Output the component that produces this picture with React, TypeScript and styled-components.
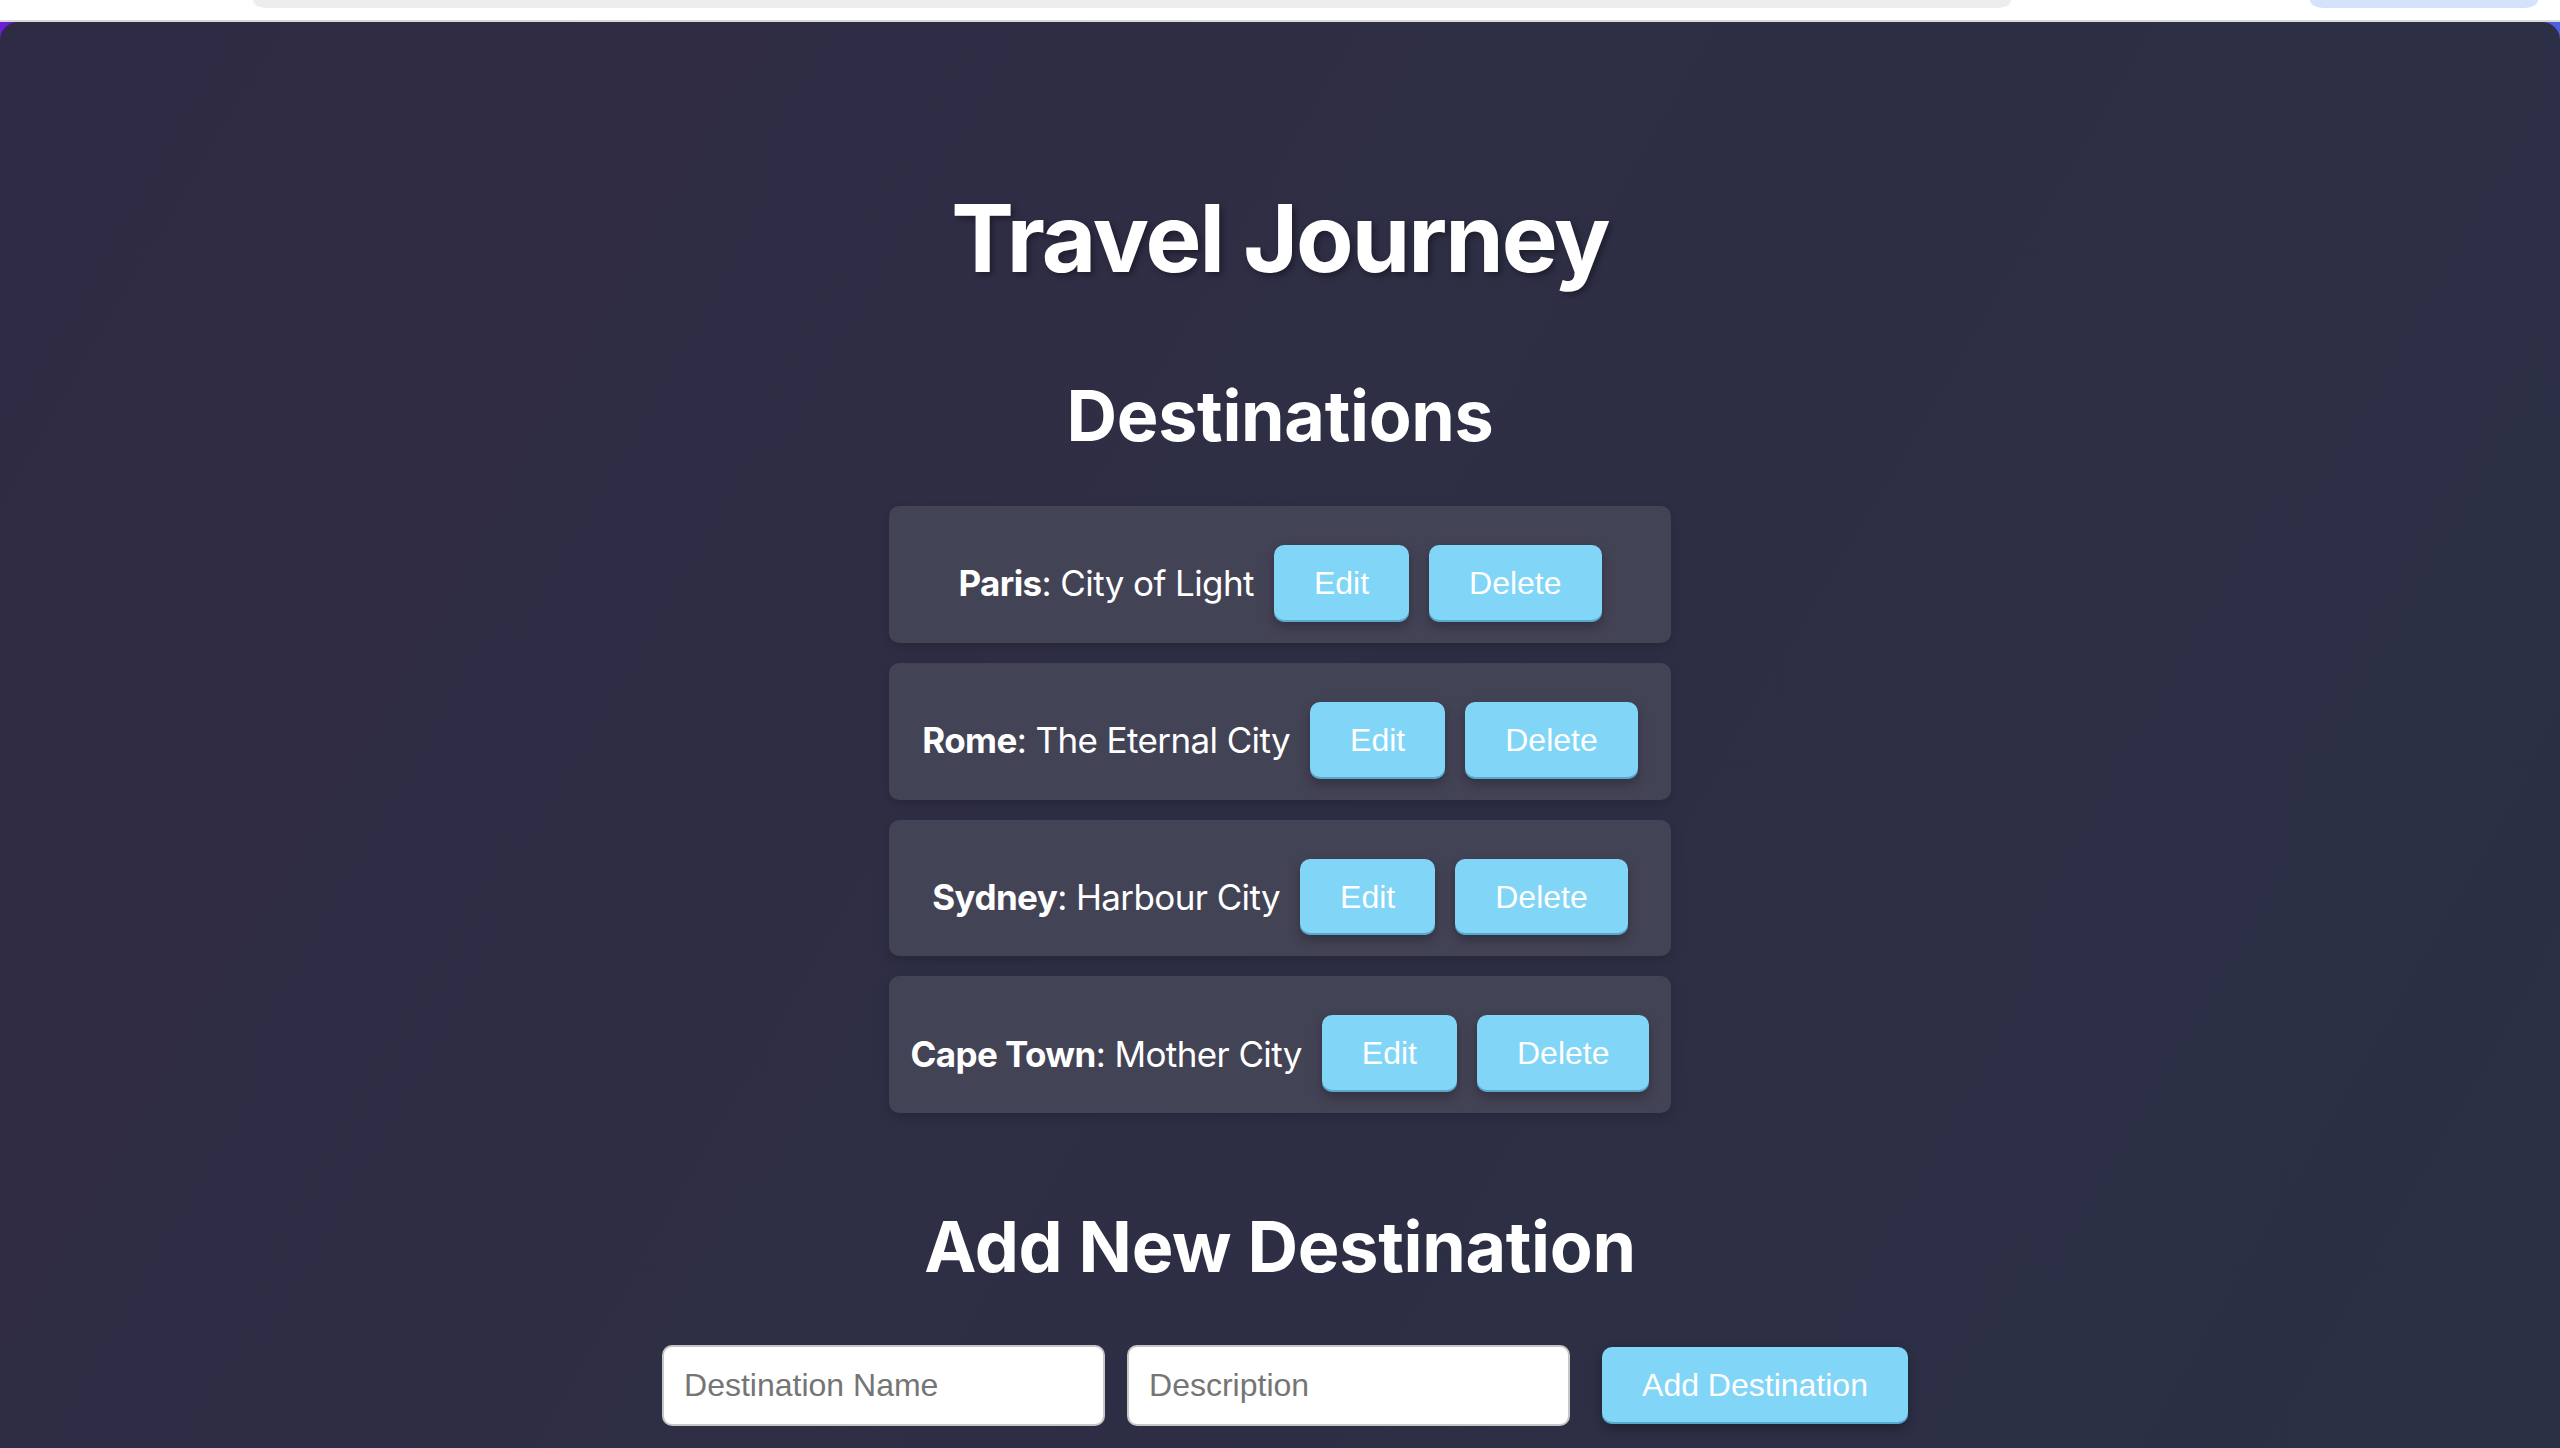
import React from "react";
import styled, { createGlobalStyle } from "styled-components";

const GlobalStyle = createGlobalStyle`
  html, body {
    margin: 0;
    padding: 0;
    height: 1448px;
    overflow: hidden;
    background: #ffffff;
  }
  * { box-sizing: border-box; }
`;

const Chrome = styled.div`
  height: 22px;
  background: #ffffff;
  border-bottom: 2px solid #d9d9d9;
  display: flex;
  align-items: flex-start;
  padding-left: 253px;
`;

const Pill = styled.div<{ $w: number; $bg: string; $ml?: number }>`
  width: ${(p) => p.$w}px;
  height: 8px;
  margin-left: ${(p) => p.$ml ?? 0}px;
  background: ${(p) => p.$bg};
  border-radius: 0 0 14px 14px / 0 0 8px 8px;
`;

const Backdrop = styled.div`
  height: 1426px;
  background: linear-gradient(90deg, #6a1fd6 0%, #5a40dc 50%, #4c5ee2 100%);
`;

const Panel = styled.main`
  height: 100%;
  border-radius: 18px 18px 0 0;
  background: linear-gradient(120deg, #302b44 0%, #2e2e45 45%, #2b3045 100%);
  display: flex;
  flex-direction: column;
  align-items: center;
  padding-top: 169px;
  font-family: Inter, "Noto Sans", sans-serif;
  color: #ffffff;
`;

const Title = styled.h1`
  margin: 0;
  font-size: 94px;
  line-height: 1;
  font-weight: 700;
  letter-spacing: -2px;
  text-shadow: 3px 3px 6px rgba(0, 0, 0, 0.35);
`;

const SectionTitle = styled.h2<{ $mt: number }>`
  margin: ${(p) => p.$mt}px 0 0;
  font-size: 70px;
  line-height: 1;
  font-weight: 700;
  letter-spacing: -0.3px;
`;

const List = styled.ul`
  list-style: none;
  margin: 55.5px 0 0;
  padding: 0;
  width: 782px;
  display: flex;
  flex-direction: column;
  gap: 20px;
`;

const Card = styled.li`
  background: #434356;
  border-radius: 10px;
  padding: 39px 0 21px;
  display: flex;
  justify-content: center;
  align-items: center;
  gap: 20px;
  box-shadow: 0 4px 12px rgba(0, 0, 0, 0.18);
`;

const Label = styled.span`
  font-size: 35px;
  font-weight: 400;
  letter-spacing: -0.6px;
  color: #ffffff;
  white-space: nowrap;
`;

const Name = styled.strong`
  font-weight: 700;
`;

const ActionButton = styled.button`
  font-family: "Liberation Sans", Arial, sans-serif;
  font-size: 32px;
  line-height: 1.15;
  padding: 20px 40px;
  border: none;
  border-radius: 10px;
  background: #81d5f7;
  color: #ffffff;
  cursor: pointer;
  box-shadow: inset 0 -2px 0 rgba(40, 110, 150, 0.45),
    0 5px 12px rgba(0, 0, 0, 0.28);
  white-space: nowrap;
`;

const Form = styled.form`
  margin-top: 63.5px;
  padding-left: 10px;
  display: flex;
  align-items: center;
`;

const TextInput = styled.input<{ $mr: number }>`
  width: 443px;
  margin-right: ${(p) => p.$mr}px;
  padding: 20px;
  border: 2px solid #c6c6c6;
  border-radius: 10px;
  background: #ffffff;
  font-family: "Liberation Sans", Arial, sans-serif;
  font-size: 32px;
  line-height: 1.15;
  color: #222;
  outline: none;
  &::placeholder {
    color: #757575;
  }
`;

const destinations = [
  { name: "Paris", description: "City of Light" },
  { name: "Rome", description: "The Eternal City" },
  { name: "Sydney", description: "Harbour City" },
  { name: "Cape Town", description: "Mother City" },
];

export default function App() {
  return (
    <>
      <GlobalStyle />
      <Chrome>
        <Pill $w={1758} $bg="#eeecee" />
        <Pill $w={228} $bg="#d4e2fc" $ml={299} />
      </Chrome>
      <Backdrop>
        <Panel>
          <Title>Travel Journey</Title>
          <SectionTitle $mt={95.5}>Destinations</SectionTitle>
          <List>
            {destinations.map((d) => (
              <Card key={d.name}>
                <Label>
                  <Name>{d.name}</Name>: {d.description}
                </Label>
                <ActionButton type="button">Edit</ActionButton>
                <ActionButton type="button">Delete</ActionButton>
              </Card>
            ))}
          </List>
          <SectionTitle $mt={98.5}>Add New Destination</SectionTitle>
          <Form onSubmit={(e) => e.preventDefault()}>
            <TextInput $mr={22} placeholder="Destination Name" />
            <TextInput $mr={32} placeholder="Description" />
            <ActionButton type="submit">Add Destination</ActionButton>
          </Form>
        </Panel>
      </Backdrop>
    </>
  );
}
